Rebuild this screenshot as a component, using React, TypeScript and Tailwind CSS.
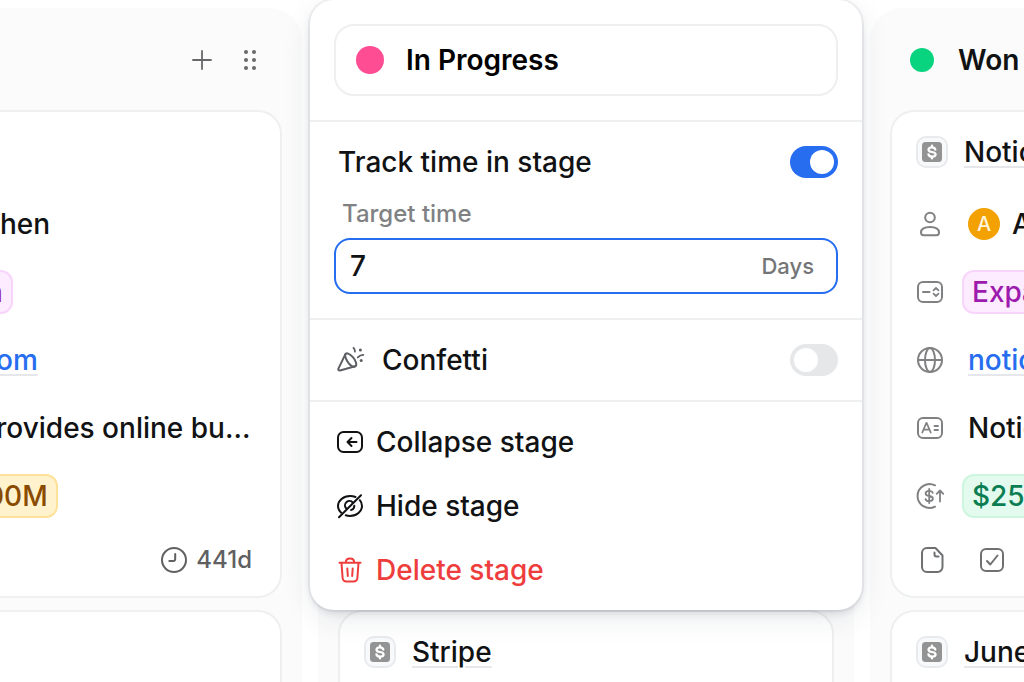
import type { ReactNode } from "react";
import { useState } from "react";
import { clsx } from "clsx";

const Icon = ({ children, className }: { children: ReactNode; className?: string }) => (
  <svg
    viewBox="0 0 28 28"
    fill="none"
    stroke="currentColor"
    strokeWidth={2}
    strokeLinecap="round"
    strokeLinejoin="round"
    aria-hidden="true"
    className={clsx("size-7 shrink-0", className)}
  >
    {children}
  </svg>
);

const PlusIcon = () => (
  <Icon>
    <path d="M14 5v18M5 14h18" strokeWidth={1.8} />
  </Icon>
);

const GripIcon = () => (
  <Icon>
    <g fill="currentColor" stroke="none">
      {[6, 14, 22].map((y) => (
        <g key={y}>
          <circle cx={10} cy={y} r={2} />
          <circle cx={18} cy={y} r={2} />
        </g>
      ))}
    </g>
  </Icon>
);

const ClockIcon = () => (
  <Icon>
    <circle cx={14} cy={14} r={12} />
    <path d="M15.2 8v5.2a1.8 1.8 0 0 1-1.8 1.8H9.3" />
  </Icon>
);

const ConfettiIcon = () => (
  <Icon>
    <path d="M9.3 8.4 2.400 22.6c-.5 1.200.4 2.200 1.600 1.900l15.200-4.200" />
    <path d="M9.300 8.400c.9-2 4.300-.9 7.600 2.800s4.400 7.900 2.300 9.100-5.400-.900-7.600-4.600-3-5.800-2.300-7.300Z" />
    <path d="M17.500 1.800c1.100 1.100 1.500 2.400 1.400 3.800M21.800 11.400c1.700-1.900 3.700-2.700 6.200-2.500" strokeWidth={1.8} />
    <g fill="currentColor" stroke="none">
      <circle cx={24.4} cy={4} r={1.5} />
      <circle cx={25.2} cy={14.4} r={1.5} />
    </g>
  </Icon>
);

const CollapseIcon = () => (
  <Icon>
    <rect x={2} y={4} width={24} height={20} rx={5.5} />
    <path d="M20.5 14h-8.500M15.500 10l-4 4 4 4" />
  </Icon>
);

const HideIcon = () => (
  <Icon>
    <path d="M19.500 5A14 14 0 0 0 14 4C7.400 4 2 8.500 2 14c0 2.600 1.200 4.900 3.200 6.700" />
    <path d="M23.800 8.200A8.600 8.600 0 0 1 26 14c0 5.500-5.400 10-12 10-1.500 0-2.900-.2-4.200-.7" />
    <path d="M16.800 10.600A4.400 4.400 0 0 0 10 16.200M18.300 13.800a4.300 4.300 0 0 1-3.300 4.300" />
    <path d="M3 25.200 25 3.200" />
  </Icon>
);

const TrashIcon = () => (
  <Icon>
    <path d="M3.500 6.800h21M9.800 6.500c0-2.500 1.500-4 4.200-4s4.200 1.500 4.200 4" />
    <path d="m5.500 7 1.100 14.900a3.700 3.700 0 0 0 3.700 3.600h7.400a3.700 3.700 0 0 0 3.700-3.600L22.500 7" />
    <path d="m11.300 12.500.5 7.500M16.700 12.500l-.5 7.500" />
  </Icon>
);

const PersonIcon = () => (
  <Icon>
    <circle cx={14} cy={7.5} r={4.8} />
    <path d="M5 22.500c0-4 3.300-5.500 9-5.500s9 1.500 9 5.500c0 1.800-1 2.700-2.500 2.700h-13C6 25.200 5 24.300 5 22.500Z" />
  </Icon>
);

const SelectIcon = () => (
  <Icon>
    <rect x={2} y={4} width={24} height={20} rx={5} />
    <path d="M7 14h6.500" />
    <path d="M17.500 12.300 20 10l2.500 2.300M17.500 15.700 20 18l2.500-2.300" strokeWidth={1.8} />
  </Icon>
);

const GlobeIcon = () => (
  <Icon>
    <circle cx={14} cy={14} r={12} />
    <ellipse cx={14} cy={14} rx={5} ry={12} />
    <path d="M2 14h24" />
  </Icon>
);

const TextIcon = () => (
  <Icon>
    <rect x={2} y={4} width={24} height={20} rx={5} />
    <path d="m6.300 18.500 4-9.500h.4l4 9.500M7.700 15.700h5.600M18.500 12h3.500M18.500 16h3.500" strokeWidth={1.8} />
  </Icon>
);

const RevenueIcon = () => (
  <Icon>
    <path d="M19 3.300A12 12 0 1 0 19 24.700" />
    <path
      d="M16.700 10.800c-.5-1.300-1.700-2-3.500-2-2.100 0-3.600 1-3.600 2.600 0 3.700 7.300 1.500 7.300 5.200 0 1.600-1.600 2.600-3.700 2.600-1.900 0-3.300-.8-3.700-2.200M13.200 7v14"
      strokeWidth={1.8}
    />
    <path d="M24 19.500V9M20.700 11.800 24 8.500l3.300 3.300" strokeWidth={1.8} />
  </Icon>
);

const FileIcon = () => (
  <Icon>
    <path d="M9 2h8.500L24.500 9.500V21a5 5 0 0 1-5 5H9a5 5 0 0 1-5-5V7a5 5 0 0 1 5-5Z" />
    <path d="M16.500 6.500v2a2 2 0 0 0 2 2h2" />
  </Icon>
);

const TaskIcon = () => (
  <Icon>
    <rect x={3} y={3} width={22} height={22} rx={5} />
    <path d="m9 15 3.300 3.500L19.500 9.500" />
  </Icon>
);

const DealBadge = () => (
  <span className="flex size-8 shrink-0 items-center justify-center rounded-[10px] border-2 border-[#e9eaee] bg-[#f8f9fa]">
    <svg viewBox="0 0 20 20" fill="none" aria-hidden="true" className="size-5">
      <rect width={20} height={20} rx={3.5} fill="#939393" />
      <path
        d="M13.400 7.600C13 6.200 11.800 5.300 10 5.300c-2 0-3.500.9-3.500 2.400 0 3.400 7.100 1.200 7.100 4.600 0 1.500-1.500 2.400-3.600 2.400-1.900 0-3.200-.8-3.600-2.300M10 3.500v2M10 14.500v2"
        stroke="#fff"
        strokeWidth={2.2}
        strokeLinecap="round"
      />
    </svg>
  </span>
);

const DealTitle = ({ name }: { name: string }) => (
  <div className="flex h-11 items-center gap-4">
    <DealBadge />
    <a
      href="#"
      className="text-[#111214] underline decoration-[#e6e7ea] decoration-2 underline-offset-4"
    >
      {name}
    </a>
  </div>
);

const Field = ({ icon, children }: { icon: ReactNode; children: ReactNode }) => (
  <div className="flex h-11 items-center gap-6">
    <span className="text-[#808183]">{icon}</span>
    {children}
  </div>
);

const Pill = ({ className, children }: { className: string; children: ReactNode }) => (
  <span className={clsx("flex h-11 items-center rounded-xl border-2 px-2", className)}>
    {children}
  </span>
);

const Switch = ({
  id,
  checked,
  onChange,
}: {
  id: string;
  checked: boolean;
  onChange: (value: boolean) => void;
}) => (
  <input
    id={id}
    type="checkbox"
    role="switch"
    checked={checked}
    onChange={(e) => onChange(e.target.checked)}
    className="flex h-8 w-12 shrink-0 cursor-pointer appearance-none items-center rounded-full bg-[#e6e7e9] px-1 before:size-6 before:rounded-full before:bg-white checked:justify-end checked:bg-[#266df0]"
  />
);

const menuItems = [
  { label: "Collapse stage", icon: <CollapseIcon />, danger: false },
  { label: "Hide stage", icon: <HideIcon />, danger: false },
  { label: "Delete stage", icon: <TrashIcon />, danger: true },
];

const StageMenu = () => {
  const [name, setName] = useState("In Progress");
  const [days, setDays] = useState("7");
  const [track, setTrack] = useState(true);
  const [confetti, setConfetti] = useState(false);

  return (
    <div className="absolute -inset-x-2 -top-2 z-10 divide-y-2 divide-[#eeeff1] rounded-3xl bg-white shadow-[0_0_0_2px_rgba(28,40,64,0.05),0_4px_8px_-2px_rgba(28,40,64,0.16),0_8px_32px_-4px_rgba(28,40,64,0.12)]">
      <div className="p-6">
        <div className="flex h-[72px] items-center gap-[22px] rounded-[20px] border-2 border-[#eeeff1] px-5">
          <span className="size-7 shrink-0 rounded-full bg-[#ff4d94]" />
          <input
            aria-label="Stage name"
            value={name}
            onChange={(e) => setName(e.target.value)}
            className="w-full min-w-0 font-semibold text-black outline-none"
          />
        </div>
      </div>

      <div className="p-6">
        <div className="flex h-8 items-center justify-between">
          <label htmlFor="track" className="pl-1">
            Track time in stage
          </label>
          <Switch id="track" checked={track} onChange={setTrack} />
        </div>
        <label
          htmlFor="target"
          className="flex h-15 items-center pt-3 pl-2 text-2xl text-[#808183]"
        >
          Target time
        </label>
        <div className="flex h-14 items-center rounded-2xl border-2 border-[#266df0] pr-[22px] pl-3.5">
          <input
            id="target"
            inputMode="numeric"
            value={days}
            onChange={(e) => setDays(e.target.value)}
            className="w-full min-w-0 outline-none"
          />
          <span className="text-[22px] text-[#747577]">Days</span>
        </div>
      </div>

      <div className="flex h-[82px] items-center justify-between pr-6 pl-[26px]">
        <label htmlFor="confetti" className="flex items-center gap-[18px]">
          <span className="text-[#5c5e63]">
            <ConfettiIcon />
          </span>
          Confetti
        </label>
        <Switch id="confetti" checked={confetti} onChange={setConfetti} />
      </div>

      <div className="p-2">
        {menuItems.map((item) => (
          <button
            key={item.label}
            type="button"
            className={clsx(
              "flex h-16 w-full cursor-pointer items-center gap-3 px-[18px]",
              item.danger && "text-[#ee3d3d]"
            )}
          >
            {item.icon}
            {item.label}
          </button>
        ))}
      </div>
    </div>
  );
};

export default function App() {
  return (
    <main className="flex h-screen gap-4 overflow-hidden bg-white pt-2 font-['Inter',sans-serif] text-[28px] leading-9 font-medium whitespace-nowrap text-[#111214]">
      <section className="min-w-0 flex-1 rounded-tr-[32px] bg-[#fbfbfb] pr-5">
        <header className="flex h-[102px] items-center justify-end gap-5 pt-0.5 pr-[18px] text-[#666769]">
          <button type="button" aria-label="Add record">
            <PlusIcon />
          </button>
          <button type="button" aria-label="Move stage">
            <GripIcon />
          </button>
        </header>
        <div className="flex flex-col gap-3">
          <article className="rounded-r-3xl border-2 border-l-0 border-[#eeeff0] bg-white pt-[90px] pb-3.5">
            <div className="flex flex-col items-start gap-6">
              <p className="flex h-11 items-center">hen</p>
              <Pill className="-ml-6 border-[#f8d5fb] bg-[#fdebff] text-[#9c1bac]">n</Pill>
              <div className="-ml-1 flex h-11 items-center">
                <a
                  href="#"
                  className="text-[#266df0] underline decoration-[#e6e7ea] decoration-2 underline-offset-4"
                >
                  om
                </a>
              </div>
              <p className="-ml-1 flex h-11 items-center">rovides online bu...</p>
              <Pill className="-ml-6 border-[#ffe19a] bg-[#fff2cc] text-[#8a4b00]">00M</Pill>
            </div>
            <div className="mt-5 flex h-11 items-center justify-end gap-2 pr-7 text-2xl text-[#5f6062]">
              <ClockIcon />
              441d
            </div>
          </article>
          <article className="h-[500px] rounded-r-3xl border-2 border-l-0 border-[#eeeff0] bg-white" />
        </div>
      </section>

      <section className="relative w-[536px] shrink-0 bg-[#fbfbfb] px-5">
        <StageMenu />
        <article className="mt-[602px] h-[500px] rounded-3xl border-2 border-[#eeeff0] bg-white px-6 pt-[18px]">
          <DealTitle name="Stripe" />
        </article>
      </section>

      <section className="w-[154px] shrink-0 rounded-tl-[32px] bg-[#fbfbfb] pl-5">
        <header className="flex h-[102px] items-center gap-6 pt-0.5 pl-5">
          <span className="size-6 shrink-0 rounded-full bg-[#08d47f]" />
          <h2 className="font-semibold">Won</h2>
        </header>
        <div className="flex flex-col gap-3">
          <article className="rounded-l-3xl border-2 border-r-0 border-[#eeeff0] bg-white pt-[18px] pb-3.5 pl-6">
            <DealTitle name="Notion" />
            <div className="mt-7 flex flex-col gap-6">
              <Field icon={<PersonIcon />}>
                <span className="flex items-center gap-3">
                  <span className="flex size-8 items-center justify-center rounded-full bg-[#f2a100] text-xl text-[#fff5dc]">
                    A
                  </span>
                  Alex
                </span>
              </Field>
              <Field icon={<SelectIcon />}>
                <Pill className="-ml-1.5 border-[#f8d5fb] bg-[#fdebff] text-[#9c1bac]">
                  Expansion
                </Pill>
              </Field>
              <Field icon={<GlobeIcon />}>
                <a
                  href="#"
                  className="text-[#266df0] underline decoration-[#e6e7ea] decoration-2 underline-offset-4"
                >
                  notion.com
                </a>
              </Field>
              <Field icon={<TextIcon />}>Notion</Field>
              <Field icon={<RevenueIcon />}>
                <Pill className="-ml-1.5 border-[#cdf5df] bg-[#e2fbee] text-[#0b7d52]">
                  $250M
                </Pill>
              </Field>
            </div>
            <div className="mt-5 flex h-11 items-center gap-8 pl-0.5 text-[#6f7072]">
              <FileIcon />
              <TaskIcon />
            </div>
          </article>
          <article className="h-[500px] rounded-l-3xl border-2 border-r-0 border-[#eeeff0] bg-white pt-[18px] pl-6">
            <DealTitle name="June" />
          </article>
        </div>
      </section>
    </main>
  );
}
